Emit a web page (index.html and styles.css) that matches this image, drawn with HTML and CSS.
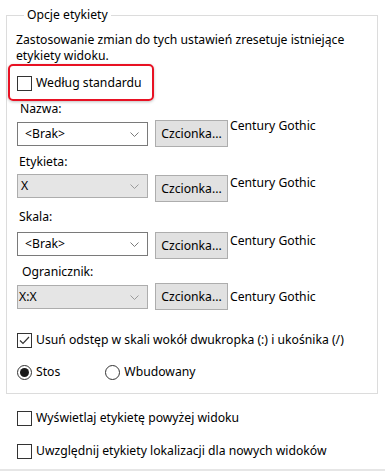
FILE: index.html
```html
<!DOCTYPE html>
<html lang="pl">
<head>
<meta charset="utf-8">
<title>Opcje etykiety</title>
<link rel="stylesheet" href="styles.css">
</head>
<body>
<fieldset class="group">
  <legend class="group-title">Opcje etykiety</legend>
  <p class="intro">Zastosowanie zmian do tych ustawień zresetuje istniejące etykiety widoku.</p>
  <div class="highlight">
    <label class="check"><span class="box"></span><span>Według standardu</span></label>
  </div>

  <div class="field field-1">
    <div class="field-label">Nazwa:</div>
    <div class="field-row">
      <div class="select"><span class="select-value">&lt;Brak&gt;</span><svg class="chev" width="9" height="5" viewBox="0 0 9 5"><polyline points="0.5,0.5 4.5,4.5 8.5,0.5" fill="none" stroke="#7a7a7a" stroke-width="1"/></svg></div>
      <button class="font-btn">Czcionka...</button>
      <span class="font-name">Century Gothic</span>
    </div>
  </div>

  <div class="field field-2">
    <div class="field-label">Etykieta:</div>
    <div class="field-row">
      <div class="select select-off"><span class="select-value">X</span><svg class="chev" width="9" height="5" viewBox="0 0 9 5"><polyline points="0.5,0.5 4.5,4.5 8.5,0.5" fill="none" stroke="#9a9a9a" stroke-width="1"/></svg></div>
      <button class="font-btn">Czcionka...</button>
      <span class="font-name">Century Gothic</span>
    </div>
  </div>

  <div class="field field-3">
    <div class="field-label">Skala:</div>
    <div class="field-row">
      <div class="select"><span class="select-value">&lt;Brak&gt;</span><svg class="chev" width="9" height="5" viewBox="0 0 9 5"><polyline points="0.5,0.5 4.5,4.5 8.5,0.5" fill="none" stroke="#7a7a7a" stroke-width="1"/></svg></div>
      <button class="font-btn">Czcionka...</button>
      <span class="font-name">Century Gothic</span>
    </div>
  </div>

  <div class="field field-4">
    <div class="field-label">Ogranicznik:</div>
    <div class="field-row">
      <div class="select select-off"><span class="select-value">X:X</span><svg class="chev" width="9" height="5" viewBox="0 0 9 5"><polyline points="0.5,0.5 4.5,4.5 8.5,0.5" fill="none" stroke="#9a9a9a" stroke-width="1"/></svg></div>
      <button class="font-btn">Czcionka...</button>
      <span class="font-name">Century Gothic</span>
    </div>
  </div>

  <label class="check check-colon"><span class="box box-checked"><svg width="11" height="9" viewBox="0 0 11 9"><polyline points="1,4.5 4,7.5 10,1" fill="none" stroke="#333" stroke-width="1.2"/></svg></span><span>Usuń odstęp w skali wokół dwukropka (:) i ukośnika (/)</span></label>

  <div class="radios">
    <label class="radio"><span class="dot dot-on"></span><span>Stos</span></label>
    <label class="radio radio-2"><span class="dot"></span><span>Wbudowany</span></label>
  </div>
</fieldset>

<div class="extra">
  <label class="check"><span class="box"></span><span>Wyświetlaj etykietę powyżej widoku</span></label>
  <label class="check"><span class="box"></span><span>Uwzględnij etykiety lokalizacji dla nowych widoków</span></label>
</div>
<div class="footer-bar"></div>
</body>
</html>
```

FILE: styles.css
```css
* { box-sizing: border-box; }
html, body {
  margin: 0;
  padding: 0;
  background: #fff;
}
body {
  width: 385px;
  height: 471px;
  overflow: hidden;
  font-family: "Noto Sans", "Open Sans", sans-serif;
  font-size: 12.2px;
  line-height: 16px;
  color: #000;
  display: flex;
  flex-direction: column;
}

.group {
  margin: 7px 0 0 6px;
  width: 372px;
  border: 1px solid #dcdcdc;
  padding: 9px 8px 13px 9px;
  min-width: 0;
}
.group-title {
  padding: 0 3px;
  margin-left: 8px;
  line-height: 16px;
}

.intro {
  margin: 0;
  width: 340px;
}

.highlight {
  margin-left: -8px;
  width: 146px;
  border: 2px solid #e81123;
  border-radius: 5px;
  padding: 9px 7px 8px 7px;
  box-shadow: 0 1px 3px rgba(0,0,0,0.25);
}

.check {
  display: flex;
  align-items: center;
  gap: 4px;
  white-space: nowrap;
}
.box {
  width: 15px;
  height: 15px;
  border: 1px solid #333;
  background: #fff;
  flex: none;
  display: flex;
  align-items: center;
  justify-content: center;
}

.field-label { padding-left: 3px; }
.field-row {
  display: flex;
  align-items: flex-start;
  margin-left: 1px;
}
.select {
  width: 131px;
  height: 24px;
  border: 1px solid #7a7a7a;
  background: #fff;
  display: flex;
  align-items: center;
  justify-content: space-between;
  padding: 0 8px 0 7px;
}
.select-off {
  background: #e5e5e5;
  border-color: #adadad;
  padding-left: 3px;
}
.font-btn {
  margin: 0 0 0 7px;
  width: 73px;
  height: 27px;
  border: 1px solid #adadad;
  background: #e1e1e1;
  font: inherit;
  color: #000;
  padding: 0;
}
.font-name {
  margin-left: 2px;
  white-space: nowrap;
}

.field-1 .field-label { padding-left: 4px; }
.field-1 .field-row { margin-top: 3px; }
.field-1 .select { margin-top: 2px; }
.field-1 .font-name { margin-top: -2px; }

.field-2 { margin-top: 7px; }
.field-2 .field-row { margin-top: 4px; }
.field-2 .font-btn { margin-top: 1px; }
.field-2 .font-name { margin-top: 1px; }

.field-3 { margin-top: 7px; }
.field-3 .field-row { margin-top: 7px; }
.field-3 .font-name { margin-top: 1px; }

.field-4 { margin-top: 5px; }
.field-4 .field-label { padding-left: 6px; }
.field-4 .field-row { margin-top: 3px; align-items: center; }
.field-4 .select { margin-top: 1px; }
.field-4 .select-off { padding-left: 1px; }

.check-colon { margin: 22px 0 0 1px; }

.radios {
  display: flex;
  margin: 16px 0 0 1px;
}
.radio {
  display: flex;
  align-items: center;
  gap: 4px;
}
.radio-2 { margin-left: 45px; }
.dot {
  width: 15px;
  height: 15px;
  border: 1px solid #333;
  border-radius: 50%;
  display: flex;
  align-items: center;
  justify-content: center;
  flex: none;
}
.dot-on::after {
  content: "";
  width: 9px;
  height: 9px;
  border-radius: 50%;
  background: #1a1a1a;
}

.extra {
  display: flex;
  flex-direction: column;
  gap: 17px;
  margin: 16px 0 0 17px;
}

.footer-bar {
  margin-top: auto;
  height: 2px;
  background: #e6e6e6;
}
```
